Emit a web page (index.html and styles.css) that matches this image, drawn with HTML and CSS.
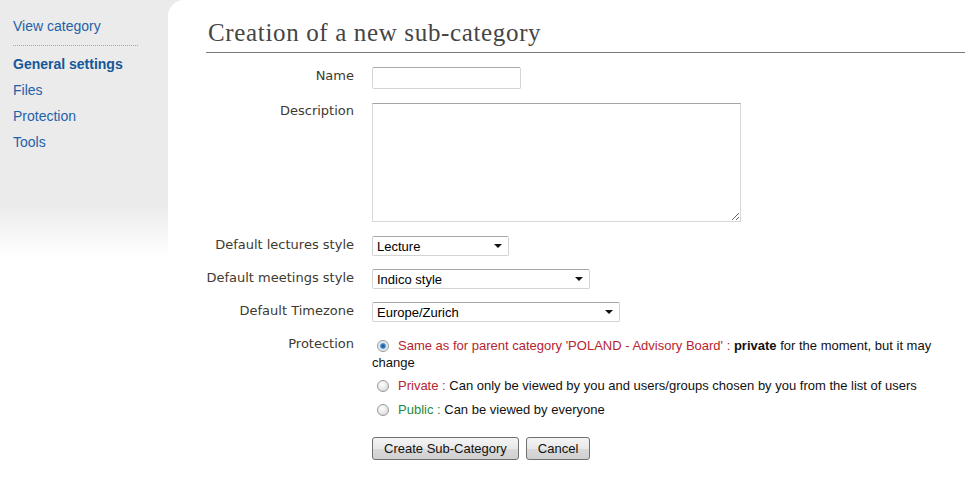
FILE: index.html
```html
<!DOCTYPE html>
<html>
<head>
<meta charset="utf-8">
<link rel="stylesheet" href="styles.css">
</head>
<body>
<div class="page">
  <nav class="sidebar">
    <a class="side-link view" href="#">View category</a>
    <div class="side-sep"></div>
    <a class="side-link active" href="#">General settings</a>
    <a class="side-link" href="#">Files</a>
    <a class="side-link" href="#">Protection</a>
    <a class="side-link" href="#">Tools</a>
  </nav>
  <main class="content">
    <h1 class="title">Creation of a new sub-category</h1>
    <form class="form">
      <div class="row row-name">
        <label class="lbl">Name</label>
        <div class="field"><input class="txt" type="text"></div>
      </div>
      <div class="row row-desc">
        <label class="lbl">Description</label>
        <div class="field"><textarea class="area"></textarea></div>
      </div>
      <div class="row row-sel">
        <label class="lbl">Default lectures style</label>
        <div class="field"><span class="sel w1"><select><option>Lecture</option></select></span></div>
      </div>
      <div class="row row-sel">
        <label class="lbl">Default meetings style</label>
        <div class="field"><span class="sel w2"><select><option>Indico style</option></select></span></div>
      </div>
      <div class="row row-sel">
        <label class="lbl">Default Timezone</label>
        <div class="field"><span class="sel w3"><select><option>Europe/Zurich</option></select></span></div>
      </div>
      <div class="row row-prot">
        <label class="lbl">Protection</label>
        <div class="field prot">
          <div class="opt first"><input type="radio" name="p" class="radio" checked><span class="red">Same as for parent category 'POLAND - Advisory Board' :</span> <b>private</b> for the moment, but it may change</div>
          <div class="opt"><input type="radio" name="p" class="radio"><span class="red">Private :</span> Can only be viewed by you and users/groups chosen by you from the list of users</div>
          <div class="opt"><input type="radio" name="p" class="radio"><span class="green">Public :</span> Can be viewed by everyone</div>
        </div>
      </div>
      <div class="row row-btn">
        <div class="lbl"></div>
        <div class="field buttons">
          <button type="button" class="btn">Create Sub-Category</button>
          <button type="button" class="btn">Cancel</button>
        </div>
      </div>
    </form>
  </main>
</div>
</body>
</html>
```

FILE: styles.css
```css
html, body {
  margin: 0;
  padding: 0;
  background: #fff;
}
.page {
  display: flex;
  min-height: 495px;
  background: linear-gradient(to bottom, #ebebeb 0, #ebebeb 205px, #ffffff 256px, #ffffff 100%);
  font-family: "Liberation Sans", Arial, sans-serif;
}
.sidebar {
  width: 168px;
  flex: none;
  display: flex;
  flex-direction: column;
  padding-top: 17px;
  box-sizing: border-box;
}
.side-link {
  display: block;
  margin-left: 13px;
  font-size: 14px;
  line-height: 18px;
  color: #1f62a9;
  text-decoration: none;
  margin-bottom: 8px;
}
.side-link.view {
  margin-bottom: 0;
}
.side-sep {
  margin: 10px 0 9px 13px;
  width: 125px;
  border-top: 1px dotted #a8a8a8;
}
.side-link.active {
  font-weight: bold;
  color: #15579a;
}
.content {
  flex: 1;
  background: #fff;
  border-top-left-radius: 16px;
  padding-left: 38px;
  padding-right: 8px;
}
.title {
  margin: 0;
  padding: 18px 0 4px 2px;
  font-family: "Liberation Serif", "Times New Roman", serif;
  font-weight: normal;
  font-size: 25px;
  line-height: 30px;
  letter-spacing: 0.65px;
  color: #454545;
  border-bottom: 1px solid #7a7a7a;
}
.form {
  display: flex;
  flex-direction: column;
  padding-top: 14px;
}
.row {
  display: flex;
  align-items: flex-start;
}
.lbl {
  width: 148px;
  flex: none;
  text-align: right;
  white-space: nowrap;
  font-family: "DejaVu Sans", Verdana, sans-serif;
  font-size: 13px;
  line-height: 16px;
  color: #3e3a30;
}
.field {
  margin-left: 18px;
}
.row-name .lbl { padding-top: 1px; }
.row-desc { margin-top: 14px; }
.row-desc .lbl { padding-top: 0; }
.row-sel { margin-top: 13px; }
.row-sel:nth-child(3) { margin-top: 14px; }
.row-sel .lbl { padding-top: 1px; }
.txt {
  display: block;
  box-sizing: border-box;
  width: 149px;
  height: 22px;
  margin: 0;
  border: 1px solid #d4d4d4;
  border-top-color: #aaa;
  border-radius: 2px;
  background: #fff;
}
.area {
  display: block;
  box-sizing: border-box;
  width: 369px;
  height: 119px;
  margin: 0;
  border: 1px solid #d8d8d8;
  border-top-color: #a5a5a5;
  resize: both;
}
.sel {
  position: relative;
  display: block;
}
.sel select {
  display: block;
  appearance: none;
  -webkit-appearance: none;
  box-sizing: border-box;
  height: 20px;
  margin: 0;
  padding: 0 0 0 4px;
  border: 1px solid #d4d4d4;
  border-top-color: #a8a8a8;
  border-radius: 2px;
  background: #fff;
  font-family: "Liberation Sans", Arial, sans-serif;
  font-size: 13px;
  color: #000;
}
.sel::after {
  content: "";
  position: absolute;
  right: 7px;
  top: 8px;
  border-left: 4px solid transparent;
  border-right: 4px solid transparent;
  border-top: 4px solid #111;
  pointer-events: none;
}
.w1 select { width: 137px; }
.w2 select { width: 218px; }
.w3 select { width: 248px; }
.row-prot { margin-top: 14px; }
.row-prot .lbl { padding-top: 0; }
.prot {
  width: 590px;
  font-family: "Liberation Sans", Arial, sans-serif;
  font-size: 13px;
  line-height: 17px;
  color: #111;
}
.opt {
  margin-bottom: 7px;
}
.opt.first {
  padding-top: 1px;
  margin-bottom: 6px;
}
.red { color: #b7242f; }
.green { color: #1e8a3c; }
.radio {
  appearance: none;
  -webkit-appearance: none;
  width: 12px;
  height: 12px;
  margin: 0 9px 0 5px;
  vertical-align: -2px;
  border: 1px solid #9a9a9a;
  border-radius: 50%;
  background: radial-gradient(circle at 40% 35%, #ffffff 0, #e4e4e4 60%, #cfcfcf 100%);
  box-sizing: border-box;
}
.radio:checked {
  background: radial-gradient(circle at 50% 50%, #1a4f86 0, #3a86c6 30%, #9cc4e4 44%, #f0f0f0 52%, #d8d8d8 100%);
}
.row-btn { margin-top: 12px; }
.buttons {
  display: flex;
  gap: 7px;
}
.btn {
  height: 23px;
  margin: 0;
  padding: 0 11px;
  border: 1px solid #707070;
  border-radius: 3px;
  background: linear-gradient(to bottom, #f4f4f4 0, #e8e8e8 50%, #dadada 51%, #cfcfcf 100%);
  font-family: "Liberation Sans", Arial, sans-serif;
  font-size: 13px;
  color: #111;
}
```
